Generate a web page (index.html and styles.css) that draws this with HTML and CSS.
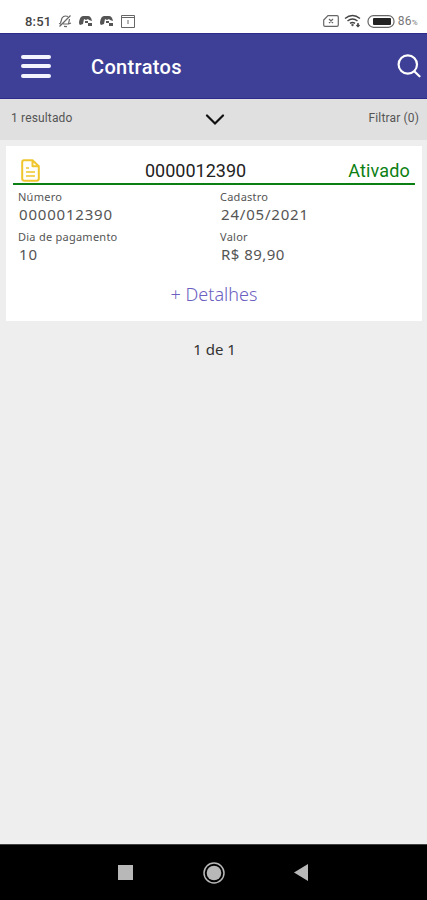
FILE: index.html
```html
<!DOCTYPE html>
<html lang="pt-BR">
<head>
    <meta charset="UTF-8">
    <title>Contratos</title>
    <link rel="stylesheet" href="styles.css">
</head>
<body>
    <div class="status">
        <span class="time">8:51</span>
        <svg class="bell" width="14" height="14" viewBox="0 0 14 14">
            <path d="M2.500 9L4 4Q6 1 10 2.500M11.500 5L10.500 10H5M1 9.500l2 .5M10.500 10l2.500-1M6 12.300l3 .4M1.500 12.500L12.500 1.500"/>
        </svg>
        <svg class="game" width="14" height="12" viewBox="0 0 14 12">
            <path class="solid" d="M0 7Q1 1 4 1h5q3 0 4 5l-3-1-1-1-2 1-2-1-1 5-3 1q-1 0-1-3zM6 6h3v2H6zM9 8h4v3H9z"/>
        </svg>
        <svg class="game" width="14" height="12" viewBox="0 0 14 12">
            <path class="solid" d="M0 7Q1 1 4 1h5q3 0 4 5l-3-1-1-1-2 1-2-1-1 5-3 1q-1 0-1-3zM6 6h3v2H6zM9 8h4v3H9z"/>
        </svg>
        <svg class="calendar" width="14" height="13" viewBox="0 0 14 13">
            <path d="M.5 .5h13v12H.5zM.5 2.500h13M7 5v4"/>
        </svg>
        <svg class="sim" width="16" height="12" viewBox="0 0 16 12">
            <path d="M5 .7h9q1.300 0 1.300 1.300v8q0 1.300-1.300 1.300H2Q.7 11.300 .7 10V5zM6 4l4 4M10 4L6 8"/>
        </svg>
        <svg class="wifi" width="18" height="14" viewBox="0 0 18 14">
            <path d="M1 4.500Q8.500-1.500 16 4.500M3.500 7Q8.500 3 13.500 7M6 9.300Q8.500 7.500 11 9.300M14 9v3M12.500 11l1.500 1.500 1.500-1.500"/>
            <circle cx="8.500" cy="11" r="1.200"/>
        </svg>
        <svg class="battery" width="28" height="13" viewBox="0 0 28 13">
            <rect x="1" y=".7" width="26" height="11.600" rx="5.500"/>
            <rect class="level" x="6" y="3" width="18" height="7" rx="1"/>
        </svg>
        <span class="percent">86<small>%</small></span>
    </div>
    <div class="header">
        <div class="menu"><span></span><span></span><span></span></div>
        <h1>Contratos</h1>
        <svg class="search" width="24" height="24" viewBox="0 0 24 24">
            <circle cx="10.800" cy="10.500" r="9.200"/>
            <path d="M17.500 17.500l5 4.800"/>
        </svg>
    </div>
    <div class="filter">
        <span class="result">1 resultado</span>
        <svg width="20" height="12" viewBox="0 0 20 12"><path d="M2 1.500l8 8 8-8"/></svg>
        <span class="filtrar">Filtrar (0)</span>
    </div>
    <div class="content">
        <div class="card">
            <div class="card-top">
                <svg width="19" height="23" viewBox="0 0 19 23">
                    <path d="M3 1.200h8.500l6.300 6v12.300q0 2.300-2.300 2.300h-12q-2.300 0-2.300-2.300V3.500Q1.200 1.200 3 1.200zM11.500 1.200v6h6.300"/>
                    <path class="lines" d="M5 9h3M5 13h9M5 17h9"/>
                </svg>
                <span class="code">0000012390</span>
                <span class="state">Ativado</span>
            </div>
            <div class="data">
                <dl><dt>Número</dt><dd>0000012390</dd></dl>
                <dl><dt>Cadastro</dt><dd>24/05/2021</dd></dl>
                <dl><dt>Dia de pagamento</dt><dd>10</dd></dl>
                <dl><dt>Valor</dt><dd class="money">R$ 89,90</dd></dl>
            </div>
            <a class="details">+ Detalhes</a>
        </div>
        <p class="page">1 de 1</p>
    </div>
    <div class="nav">
        <svg width="15" height="15"><rect width="15" height="15"/></svg>
        <svg width="22" height="22" viewBox="0 0 22 22">
            <circle class="ring" cx="11" cy="11" r="10"/>
            <circle cx="11" cy="11" r="7.300"/>
        </svg>
        <svg width="14" height="17" viewBox="0 0 14 17"><path d="M14 0v17L0 8.500z"/></svg>
    </div>
</body>
</html>
```

FILE: styles.css
```css
*{
    margin: 0;
    padding: 0;
    box-sizing: border-box;
}
body{
    height: 900px;
    display: flex;
    flex-direction: column;
    background: #eeeeee;
    font-family: Roboto, "Liberation Sans", sans-serif;
    overflow: hidden;
}
svg{
    display: block;
    flex: none;
    fill: none;
}
span, dt, dd{
    white-space: nowrap;
}
.status{
    height: 33px;
    padding: 9px 9px 0 25px;
    display: flex;
    align-items: center;
    background: #fff;
    color: #444;
}
.status svg{
    stroke: #666;
    stroke-width: 1.2;
}
.time{
    width: 33px;
    font-size: 13px;
    font-weight: 500;
    letter-spacing: .2px;
}
.bell{
    margin-right: 7px;
}
.game{
    margin-right: 7px;
}
.status .game .solid{
    fill: #555;
    stroke: none;
}
.status .calendar{
    stroke-width: 1;
}
.sim{
    margin-left: auto;
}
.wifi{
    margin-left: 5px;
}
.status .wifi{
    stroke: #444;
    stroke-width: 1.5;
}
.wifi circle{
    fill: #555;
    stroke: none;
}
.battery{
    margin-left: 5px;
}
.battery .level{
    fill: #222;
    stroke: none;
}
.percent{
    margin-left: 3px;
    font-size: 12px;
    letter-spacing: .3px;
    color: #777;
}
.percent small{
    font-size: 8px;
}
.header{
    height: 66px;
    padding: 0 7px 0 21px;
    display: flex;
    align-items: center;
    background: #3e3f96;
    border-top: 1px solid #2d2c8c;
    border-bottom: 1px solid #2d2c8c;
    color: #fff;
}
.menu{
    width: 30px;
    height: 23px;
    display: flex;
    flex-direction: column;
    justify-content: space-between;
}
.menu span{
    height: 4px;
    border-radius: 2px;
    background: #f4f4ff;
}
h1{
    margin: 2px 0 0 40px;
    font-size: 20px;
    font-weight: 500;
    letter-spacing: .35px;
}
.search{
    margin: 0 -1px 0 auto;
    stroke: #fff;
    stroke-width: 2.2;
    stroke-linecap: round;
}
.filter{
    height: 41px;
    padding: 0 8px 4px 11px;
    display: grid;
    grid-template-columns: 1fr 20px 1fr;
    align-items: center;
    background: #e0e0e0;
    color: #555;
    font-size: 12px;
    letter-spacing: .15px;
}
.filter svg{
    stroke: #111;
    stroke-width: 2.2;
    stroke-linecap: round;
    margin-top: 4px;
}
.filtrar{
    text-align: right;
}
.content{
    flex: 1;
    padding: 6px 5px 0 6px;
}
.card{
    height: 175px;
    padding: 10px 7px 0;
    background: #fff;
}
.card-top{
    height: 29px;
    padding: 2px 5px 0 8px;
    display: grid;
    grid-template-columns: 124px 1fr auto;
    align-items: center;
    border-bottom: 2px solid #0b7f12;
    font-size: 18px;
}
.card-top svg{
    stroke: #efc62d;
    stroke-width: 2;
    stroke-linejoin: round;
}
.card-top .lines{
    stroke-width: 1.5;
}
.code{
    color: #222;
}
.state{
    color: #0b7f12;
    letter-spacing: .15px;
}
.data{
    padding: 4px 0 0 5px;
    display: grid;
    grid-template-columns: 202px 1fr;
    font-family: "Noto Sans", sans-serif;
    color: #555;
}
dl{
    height: 40px;
}
dt{
    font-size: 11px;
    line-height: 16px;
    letter-spacing: .25px;
}
dd{
    padding-left: 1px;
    font-size: 15px;
    line-height: 19px;
    letter-spacing: .8px;
}
.money{
    letter-spacing: .45px;
}
.details{
    display: block;
    margin-top: 13px;
    font: 300 18px/24px "Noto Sans", sans-serif;
    text-align: center;
    color: #6b60c0;
}
.page{
    margin-top: 19px;
    padding-left: 1px;
    font-family: "Noto Sans", sans-serif;
    font-size: 15px;
    line-height: 18px;
    text-align: center;
    color: #333;
}
.nav{
    height: 56px;
    padding: 0 119px 0 118px;
    display: flex;
    align-items: center;
    justify-content: space-between;
    background: #000;
    border-top: 1px solid #444;
}
.nav svg{
    fill: #b8b8b8;
}
.nav .ring{
    fill: none;
    stroke: #b8b8b8;
    stroke-width: 1.5;
}
```
